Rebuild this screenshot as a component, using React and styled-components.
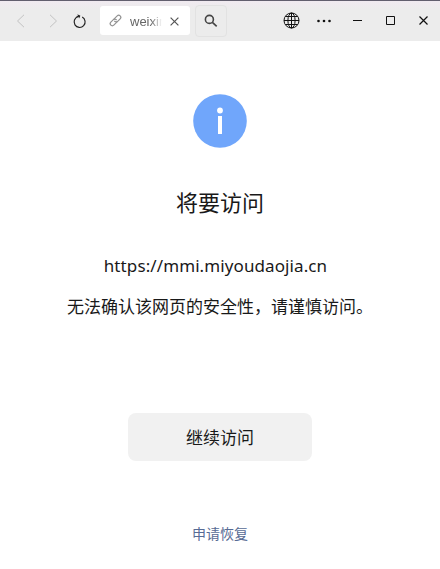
import React from "react";
import styled, { createGlobalStyle } from "styled-components";

const GlobalStyle = createGlobalStyle`
  * { box-sizing: border-box; }
  body { margin: 0; background: #fff; }
`;

const Window = styled.div`
  width: 440px;
  height: 569px;
  overflow: hidden;
  display: flex;
  flex-direction: column;
  background: #fff;
  color: #191919;
  font-family: "Noto Sans", "Noto Sans CJK SC", sans-serif;
`;

const Toolbar = styled.header`
  height: 41px;
  flex: none;
  display: flex;
  align-items: center;
  border-top: 1px solid #625f6e;
  background: linear-gradient(#f0eaf0, #ececec 8px);
`;

const ToolButton = styled.button`
  width: ${(p) => p.$width}px;
  height: 40px;
  padding: 0 0 ${(p) => p.$lift || 0}px;
  border: 0;
  background: none;
  color: ${(p) => p.$color || "#111"};
  display: flex;
  align-items: center;
  justify-content: center;
  svg { display: block; }
`;

const Tab = styled.div`
  width: 90px;
  height: 29px;
  margin: 0 0 1px 5px;
  padding-left: 8px;
  border-radius: 3px;
  background: #fff;
  display: flex;
  align-items: center;
`;

const TabTitle = styled.span`
  width: 32px;
  margin: 2px 0 0 7px;
  overflow: hidden;
  white-space: nowrap;
  font: 13px/20px "Liberation Sans", sans-serif;
  color: #666;
  -webkit-mask-image: linear-gradient(90deg, #000 65%, transparent 100%);
  mask-image: linear-gradient(90deg, #000 65%, transparent 100%);
`;

const TabClose = styled.span`
  margin: 2px 0 0 8px;
  display: flex;
  color: #555;
`;

const SearchButton = styled.button`
  width: 32px;
  height: 32px;
  margin: 0 48px 0 5px;
  padding: 0;
  border: 1px solid #e2e2e2;
  border-radius: 4px;
  background: #ececec;
  color: #444;
  display: flex;
  align-items: center;
  justify-content: center;
`;

const Content = styled.main`
  flex: 1;
  display: flex;
  flex-direction: column;
  align-items: center;
  padding-top: 53px;
`;

const Title = styled.h1`
  margin: 38px 0 0;
  font-size: 22px;
  font-weight: 400;
  line-height: 32px;
`;

const Address = styled.p`
  margin: 34px 0 0;
  padding-right: 9px;
  font-size: 17px;
  letter-spacing: 0.1px;
  line-height: 28px;
  white-space: nowrap;
`;

const Message = styled.p`
  margin: 13px 0 0;
  font-size: 17px;
  line-height: 28px;
  white-space: nowrap;
`;

const ContinueButton = styled.button`
  width: 184px;
  height: 48px;
  margin-top: 92px;
  padding: 0 0 2px;
  border: 0;
  border-radius: 8px;
  background: #f1f1f1;
  color: #191919;
  font: inherit;
  font-size: 17px;
`;

const RestoreLink = styled.a`
  margin-top: 63px;
  font-size: 14px;
  line-height: 20px;
  color: #576b95;
`;

const Icon = ({ w = 16, h = w, sw = 1, children }) => (
  <svg width={w} height={h} viewBox={`0 0 ${w} ${h}`} fill="none" stroke="currentColor" strokeWidth={sw}>
    {children}
  </svg>
);

export default function App() {
  return (
    <>
      <GlobalStyle />
      <Window>
        <Toolbar>
          <ToolButton $width={41} $color="#c2c2c2" aria-label="Back">
            <Icon w={9} h={14}><path d="M8 .8 1.5 7 8 13.2" /></Icon>
          </ToolButton>
          <ToolButton $width={24} $color="#c2c2c2" aria-label="Forward">
            <Icon w={9} h={14}><path d="M1 .8 7.5 7 1 13.2" /></Icon>
          </ToolButton>
          <ToolButton $width={30} $color="#222" aria-label="Reload">
            <Icon w={16} h={16} sw={1.15}>
              <path d="M10.2 4.1A5.5 5.5 0 1 1 6 3.7" />
              <path d="M4.6 3.5 7.6 3.1" />
              <path d="M5.4 1.2 8.4 2.8 7.1 5.4z" fill="currentColor" stroke="none" />
            </Icon>
          </ToolButton>
          <Tab>
            <Icon w={15} sw={1.2}>
              <g stroke="#929292" transform="rotate(-45 7.5 7.5)">
                <path d="M8.3 9.6H3a2.1 2.1 0 0 1 0-4.2h3.6a2.1 2.1 0 0 1 2 2.6" />
                <path d="M6.7 5.4H12a2.1 2.1 0 0 1 0 4.2H8.4a2.1 2.1 0 0 1-2-2.6" />
              </g>
            </Icon>
            <TabTitle>weixin</TabTitle>
            <TabClose><Icon w={9} sw={1.2}><path d="m.6.6 7.8 7.8m0-7.8L.6 8.4" /></Icon></TabClose>
          </Tab>
          <SearchButton aria-label="Search">
            <Icon w={14} sw={1.6}>
              <circle cx="5.4" cy="5.4" r="4" />
              <path d="m8.4 8.4 4.3 4" />
            </Icon>
          </SearchButton>
          <ToolButton $width={32} $lift={1} aria-label="Language">
            <Icon w={17} sw={1}>
              <circle cx="8.5" cy="8.5" r="7.5" />
              <ellipse cx="8.5" cy="8.5" rx="3.6" ry="7.5" />
              <path d="M8.5 1v15M1 8.5h15M2.4 4.5h12.2M2.4 12.5h12.2" />
            </Icon>
          </ToolButton>
          <ToolButton $width={34} $lift={1} aria-label="More">
            <Icon w={14} h={4}>
              <g fill="currentColor" stroke="none">
                <circle cx="1.5" cy="2" r="1.3" />
                <circle cx="7" cy="2" r="1.3" />
                <circle cx="12.5" cy="2" r="1.3" />
              </g>
            </Icon>
          </ToolButton>
          <ToolButton $width={32} aria-label="Minimize">
            <Icon w={9} h={2}><path d="M0 .5h9" /></Icon>
          </ToolButton>
          <ToolButton $width={35} $lift={1} aria-label="Maximize">
            <Icon w={9}><path d="M.5.5h8v8h-8z" /></Icon>
          </ToolButton>
          <ToolButton $width={31} $lift={1} aria-label="Close">
            <Icon w={9} sw={1.2}><path d="m.5.5 8 8m0-8-8 8" /></Icon>
          </ToolButton>
        </Toolbar>
        <Content>
          <Icon w={54}>
            <circle cx="27" cy="27" r="26.8" fill="#70a6fb" stroke="none" />
            <circle cx="27" cy="16.5" r="2.9" fill="#fff" stroke="none" />
            <path d="M25 22h4v18h-4z" fill="#fff" stroke="none" />
          </Icon>
          <Title>将要访问</Title>
          <Address>https://mmi.miyoudaojia.cn</Address>
          <Message>无法确认该网页的安全性，请谨慎访问。</Message>
          <ContinueButton>继续访问</ContinueButton>
          <RestoreLink>申请恢复</RestoreLink>
        </Content>
      </Window>
    </>
  );
}
